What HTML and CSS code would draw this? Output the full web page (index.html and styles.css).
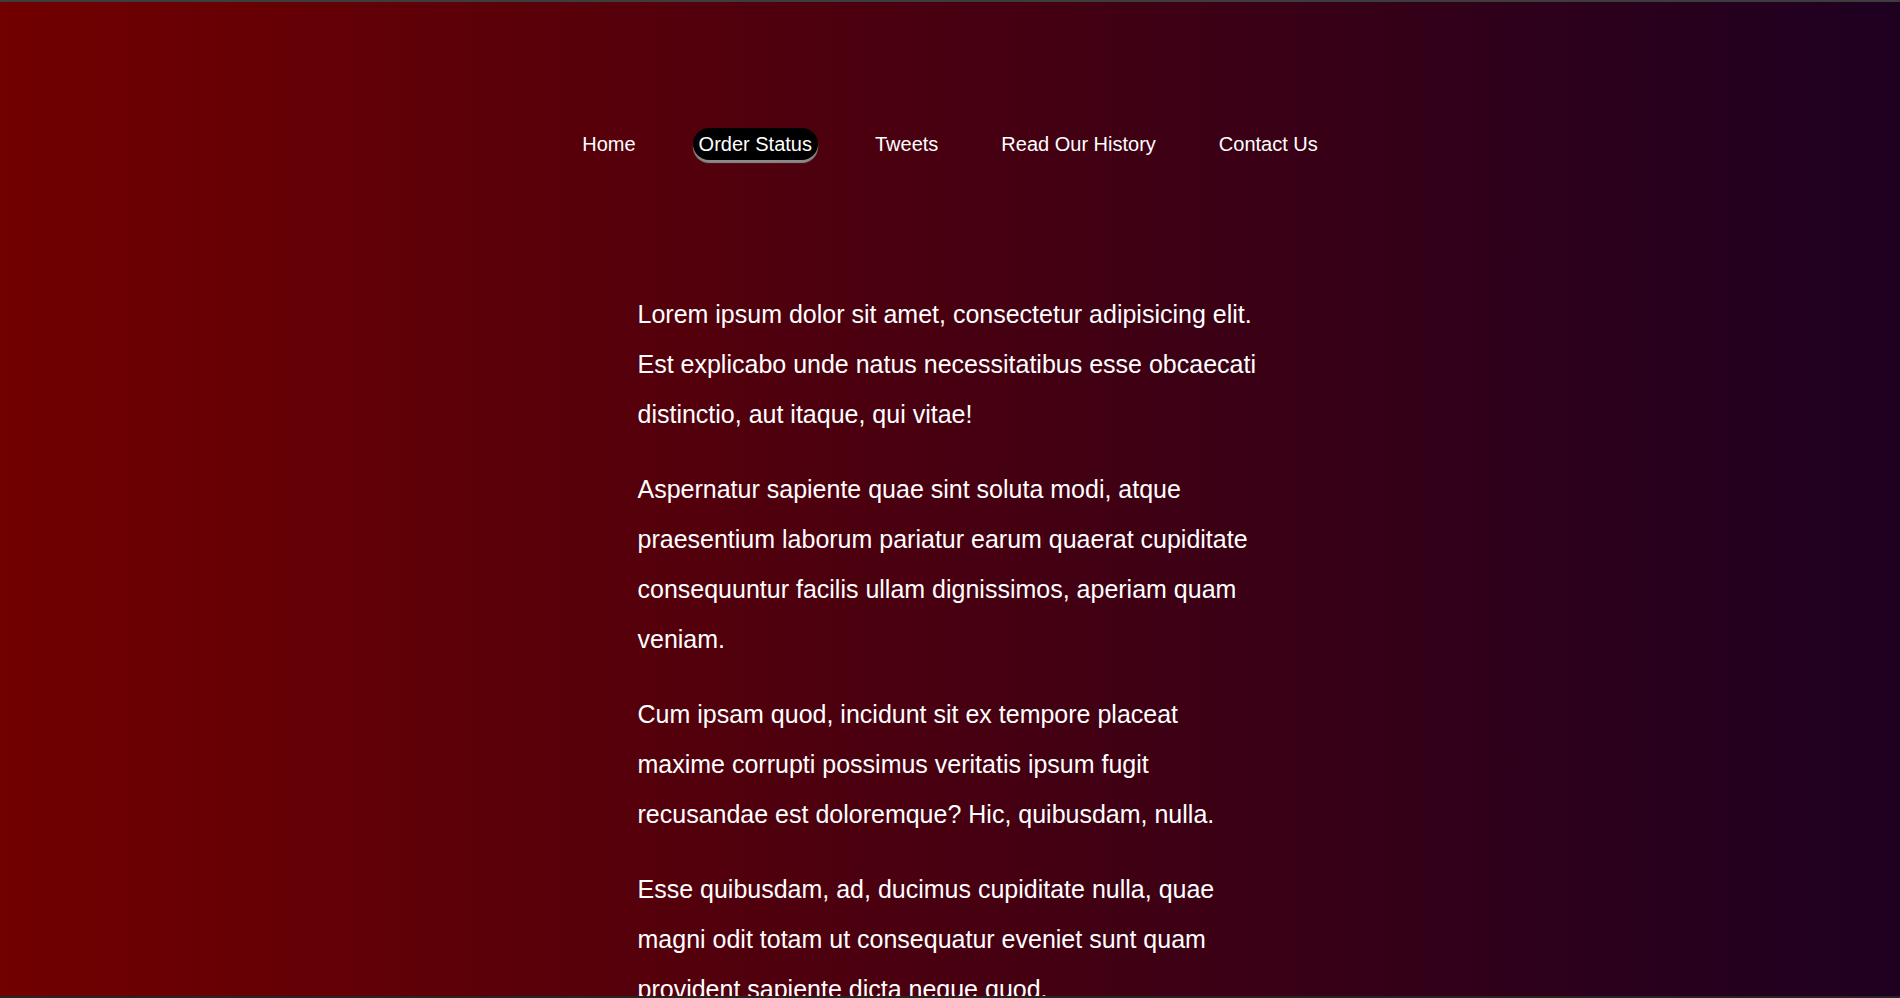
FILE: index.html
```html
<!DOCTYPE html>
<html lang="en">
<head>
<meta charset="utf-8">
<title>Order Status</title>
<link rel="stylesheet" href="styles.css">
</head>
<body>
<header class="site-header">
  <nav class="main-nav">
    <a class="nav-link" href="#">Home</a>
    <a class="nav-link active" href="#">Order Status</a>
    <a class="nav-link" href="#">Tweets</a>
    <a class="nav-link" href="#">Read Our History</a>
    <a class="nav-link" href="#">Contact Us</a>
  </nav>
</header>
<main class="content">
  <p>Lorem ipsum dolor sit amet, consectetur adipisicing elit. Est explicabo unde natus necessitatibus esse obcaecati distinctio, aut itaque, qui vitae!</p>
  <p>Aspernatur sapiente quae sint soluta modi, atque praesentium laborum pariatur earum quaerat cupiditate consequuntur facilis ullam dignissimos, aperiam quam veniam.</p>
  <p>Cum ipsam quod, incidunt sit ex tempore placeat maxime corrupti possimus veritatis ipsum fugit recusandae est doloremque? Hic, quibusdam, nulla.</p>
  <p>Esse quibusdam, ad, ducimus cupiditate nulla, quae magni odit totam ut consequatur eveniet sunt quam provident sapiente dicta neque quod.</p>
  <p>Voluptatum, eum. Nobis, quae ipsam sint magnam incidunt, dolorum assumenda porro architecto voluptates odit similique.</p>
</main>
</body>
</html>
```

FILE: styles.css
```css
html {
  background: #1e0020;
}

body {
  margin: 0;
  min-height: 100vh;
  border-top: 2px solid #3d3d3d;
  background: linear-gradient(to right, #710000 0%, #1e0021 100%);
  font-family: "Liberation Sans", Arial, sans-serif;
  color: #ffffff;
}

body::after {
  content: "";
  position: fixed;
  left: 0;
  right: 0;
  bottom: 0;
  height: 2px;
  background: #2a2222;
}

.site-header {
  padding-top: 126px;
}

.main-nav {
  display: flex;
  justify-content: center;
  gap: 51px;
}

.nav-link {
  color: #ffffff;
  text-decoration: none;
  font-size: 20px;
  line-height: 22px;
  padding: 5px 6px;
  border-radius: 18px;
}

.nav-link.active {
  background: #000000;
  box-shadow: 0 3px 1px #8a8a8a;
}

.content {
  width: 625px;
  margin: 0 auto;
  padding-top: 104px;
}

.content p {
  font-size: 25px;
  line-height: 50px;
  margin: 25px 0;
}
```
